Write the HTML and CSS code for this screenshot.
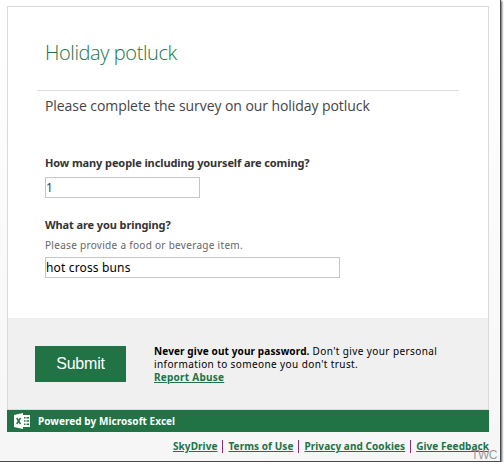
FILE: index.html
```html
<!DOCTYPE html>
<html lang="en">
  <head>
    <meta charset="UTF-8">
    <meta name="viewport" content="width=device-width, initial-scale=1.0">
    <title>Holiday potluck</title>
    <link rel="stylesheet" href="styles.css">
  </head>
  <body>
    <div class="window">
      <form class="survey">
        <div class="survey-body">
          <h1 class="title">Holiday potluck</h1>
          <p class="intro">Please complete the survey on our holiday potluck</p>

          <label class="question" for="people">How many people including yourself are coming?</label>
          <input class="answer answer-short" id="people" type="text" value="1">

          <label class="question" for="dish">What are you bringing?</label>
          <p class="hint">Please provide a food or beverage item.</p>
          <input class="answer answer-long" id="dish" type="text" value="hot cross buns">
        </div>

        <div class="submit-bar">
          <button class="submit-button" type="button">Submit</button>
          <p class="warning"><b>Never give out your password.</b> Don't give your personal<br>information to someone you don't trust.<br><a class="report" href="#">Report Abuse</a></p>
        </div>

        <div class="powered-bar">
          <!-- Excel logo -->
          <svg class="excel-icon" width="16" height="16" viewBox="0 0 16 16">
            <path d="M9 2h7v12H9z" fill="#fff"/>
            <path d="M0 2l9-2v16l-9-2z" fill="#fff"/>
            <path d="M2.7 5l3.8 6M6.5 5l-3.8 6" stroke="#217346" stroke-width="1.5" fill="none"/>
            <path d="M10 4h1.5v1.5H10zM12.5 4H15v1.5h-2.5zM10 7.2h1.5v1.5H10zM12.5 7.2H15v1.5h-2.5zM10 10.5h1.5V12H10zM12.5 10.5H15V12h-2.5z" fill="#217346"/>
          </svg>
          <span class="powered">Powered by Microsoft Excel</span>
        </div>
      </form>

      <div class="links">
        <a href="#">SkyDrive</a>
        <a href="#">Terms of Use</a>
        <a href="#">Privacy and Cookies</a>
        <a href="#">Give Feedback</a>
      </div>
      <span class="watermark">TWC</span>
    </div>
  </body>
</html>
```
FILE: styles.css
```css
* {
    box-sizing: border-box;
}

body {
    margin: 0;
    background-color: white;
    font-family: "Noto Sans", "Open Sans", sans-serif;
    overflow: hidden;
}

.window {
    position: relative;
    width: 501px;
    height: 462px;
    padding: 6px 12px 0 7px;
    background: linear-gradient(white, #f6f6f6);
    border-right: 1px solid #4a4a4a;
    border-bottom: 1px solid #4a4a4a;
    box-shadow: 1px 1px 2px #555;
}

.survey {
    width: 482px;
}

.survey-body {
    height: 312px;
    padding: 0 29px;
    background-color: white;
    border: 1px solid #d9dade;
    border-bottom: none;
}

.title {
    height: 84px;
    margin: 0;
    padding: 32px 0 0 8px;
    border-bottom: 1px solid #dedede;
    color: #217346;
    font-family: "Open Sans", sans-serif;
    font-size: 20px;
    font-weight: 300;
    letter-spacing: -0.4px;
    line-height: 28px;
}

.intro {
    height: 20px;
    margin: 5px 0 39px 8px;
    color: #444;
    font-family: "Open Sans", sans-serif;
    font-size: 14px;
    letter-spacing: -0.07px;
    line-height: 20px;
    white-space: nowrap;
}

.question {
    display: block;
    height: 16px;
    margin-left: 8px;
    color: #333;
    font-size: 11px;
    font-weight: bold;
    letter-spacing: -0.1px;
    line-height: 16px;
}

.hint {
    margin: 5px 0 4px 8px;
    color: #666;
    font-size: 10px;
    letter-spacing: 0.3px;
    line-height: 15px;
}

.answer {
    display: block;
    height: 21px;
    margin: 6px 0 18px 8px;
    padding: 0;
    border: 1px solid #c6c6c6;
    background-color: white;
    color: black;
    font-family: "Noto Sans", sans-serif;
    font-size: 12px;
    letter-spacing: 0.15px;
}

.answer-short {
    width: 155px;
    margin-bottom: 19px;
    color: #444;
}

.answer-long {
    width: 295px;
    margin-top: 4px;
}

.submit-bar {
    display: flex;
    height: 92px;
    padding: 28px 0 0 27px;
    background-color: #f0f0f0;
    border: 1px solid #d9dade;
    border-top: none;
}

.submit-button {
    width: 91px;
    height: 36px;
    padding: 0;
    border: none;
    background-color: #217346;
    color: white;
    font-family: "Liberation Sans", Arial, sans-serif;
    font-size: 16px;
    letter-spacing: -0.2px;
}

.warning {
    margin: -1px 0 0 28px;
    color: black;
    font-size: 10px;
    letter-spacing: 0.4px;
    line-height: 13px;
    white-space: nowrap;
}

.warning b {
    letter-spacing: 0.12px;
}

.report {
    color: #217346;
    font-weight: bold;
    letter-spacing: 0.25px;
}

.powered-bar {
    display: flex;
    align-items: center;
    height: 22px;
    padding-left: 7px;
    background-color: #217346;
    color: white;
    font-size: 10px;
    font-weight: bold;
}

.powered {
    margin-left: 8px;
    letter-spacing: 0.05px;
}

.links {
    display: flex;
    justify-content: flex-end;
    margin: 8px -1px 0 0;
    font-size: 10px;
    font-weight: bold;
    letter-spacing: 0.07px;
    line-height: 13px;
    white-space: nowrap;
}

.links a {
    color: #217346;
}

.links a + a {
    margin-left: 5px;
    padding-left: 5px;
    border-left: 1px solid #80307c;
}

.watermark {
    position: absolute;
    right: 3px;
    bottom: -1px;
    color: #999;
    font-family: "Liberation Sans", Arial, sans-serif;
    font-size: 12px;
    line-height: 14px;
    letter-spacing: -0.5px;
}
```
